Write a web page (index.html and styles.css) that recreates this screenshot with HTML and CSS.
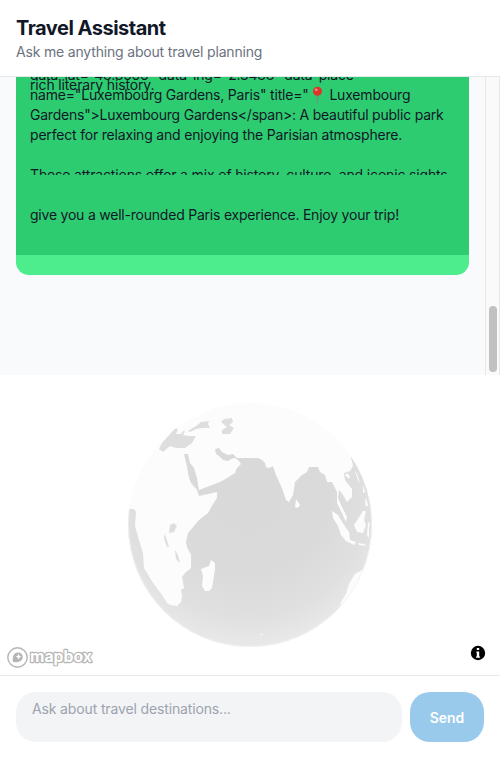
FILE: index.html
```html
<!DOCTYPE html>
<html lang="en">
<head>
<meta charset="utf-8">
<title>Travel Assistant</title>
<link rel="stylesheet" href="styles.css">
</head>
<body>
<header class="header">
  <h1 class="title">Travel Assistant</h1>
  <p class="subtitle">Ask me anything about travel planning</p>
</header>
<main class="chat">
  <div class="messages">
    <div class="bubble">
      <div class="block block-list">
        <p class="line l1">data-lat="48.8566" data-lng="2.3488" data-place-</p>
        <p class="line l2">name="Luxembourg Gardens, Paris" title="<svg class="pin" viewBox="0 0 17 18"><path d="M7.6 8h1.8l-.4 9h-1z" fill="#71907f"/><circle cx="8.5" cy="5.2" r="4.5" fill="#dc352b"/><circle cx="7.2" cy="3.8" r="1.4" fill="#f58a7c"/></svg> Luxembourg</p>
        <p class="line l3">Gardens"&gt;Luxembourg Gardens&lt;/span&gt;: A beautiful public park</p>
        <p class="line l4">perfect for relaxing and enjoying the Parisian atmosphere.</p>
        <p class="line"></p>
        <p class="line l5">These attractions offer a mix of history, culture, and iconic sights</p>
        <p class="overlap">rich literary history.</p>
      </div>
      <div class="block block-end">
        <p class="line l6">give you a well-rounded Paris experience. Enjoy your trip!</p>
      </div>
    </div>
  </div>
  <div class="scrollbar"><div class="thumb"></div></div>
</main>
<section class="map">
<svg class="globe" viewBox="0 375 500 300" width="500" height="300">
  <defs>
    <radialGradient id="sea" gradientUnits="userSpaceOnUse" cx="247" cy="493" r="160">
      <stop offset="0" stop-color="#d9d9d9"/><stop offset=".5" stop-color="#dadada"/><stop offset=".78" stop-color="#e0e0e0"/><stop offset="1" stop-color="#ebebeb"/>
    </radialGradient>
    <linearGradient id="rim" x1="0" y1="0" x2="0" y2="1">
      <stop offset=".3" stop-color="#f8f8f8" stop-opacity="0"/><stop offset=".55" stop-color="#f4f4f4"/>
    </linearGradient>
    <clipPath id="disc"><circle cx="250" cy="525" r="122"/></clipPath>
  </defs>
  <g clip-path="url(#disc)">
    <rect x="120" y="395" width="260" height="260" fill="#fcfcfc"/>
    <path fill="url(#sea)" d="M120 509H131L134 509L136 512L135 526L139 540L143 553L144 568L153 583L162 595L167 603L170 605L177 606L181 602L182 597L181 590L184 588L182 577L185 573L191 568L191 555L187 547L186 542L188 533L199 520L208 513L213 504L217 498L217 492L199 496L197 490L191 483L189 478L187 467L184 454H188L190 463L194 468L197 478L199 490L220 482L227 478L235 473L237 468L241 464L238 460L235 458L231 459L228 461L223 460L219 456L216 454L215 449L219 448L222 452L228 455L233 454L237 458H258L262 460L265 463L266 467L269 468L273 466L276 475L282 488L286 500L289 502L293 495L295 482L302 475L307 472L309 467H318L320 472L325 475L327 482L332 482L337 492V503L341 511L346 522L347 517L342 507L338 498L339 490L343 495L347 502L352 497L352 489L345 480L344 473L350 471L353 466L351 457L354 454L380 465V655H120Z"/>
    <path class="sea" d="M159 449L162 443L171 433L175 428L178 429L176 434L181 434L183 431H185L183 435L188 436H196L192 443L185 448H176L170 446L163 452Z M188 431L196 426L201 422L209 421L208 424L210 428H203L196 429L190 432Z M221 422L224 419L232 418L233 422L229 425L234 428L230 434L222 434V430L227 427Z"/>
    <path class="sea" d="M170 525L174 523L177 526L174 532L169 533Z M165 534L169 547L167 547L164 538Z M175 550L178 555L180 563L176 559Z"/>
    <path class="land" d="M201 569L209 566L211 560L215 563L215 569L212 588L209 591H205L202 586L203 576Z M296 499L300 505L298 508L295 507Z"/>
    <path class="land" d="M332 511L338 515L344 525L349 532L350 540L356 542L354 545L346 541L341 535L338 526L333 518Z M356 522L363 511L366 511L364 520L366 525L363 533L357 532L354 525Z M347 473L350 476L349 479L345 475Z M355 471L357 474L360 483L358 480Z M363 485L365 492L363 493Z M366 498L368 505L366 507L365 501Z M368 523L370 522L369 529L369 538L367 535Z M358 543L364 544L366 546L359 545Z M380 558L364 569L355 574L349 584L346 594L341 602L340 606L347 600L380 604Z M259 634L263 634L262 635Z"/>
  </g>
  <circle cx="250" cy="525" r="121.5" fill="none" stroke="url(#rim)" stroke-opacity=".8"/>
  <g class="logo">
    <circle cx="17.5" cy="657.5" r="9.7" fill="#fff" stroke="#b5b5b5" stroke-width="1.4"/>
    <path d="M12.9 662c-.6-5 .4-9.4 5.2-9.4 2.8 0 4.7 2 4.7 4.3 0 4.5-5 5.7-9.9 5.1z" fill="#b5b5b5"/>
    <path d="m18.6 653.8.9 2 2 .9-2 .9-.9 2-.9-2-2-.9 2-.9z" fill="#fff"/>
    <text class="wordmark" x="30" y="662" textLength="62" lengthAdjust="spacingAndGlyphs">mapbox</text>
  </g>
  <circle cx="478" cy="653" r="7.2"/>
  <path d="M476.8 648h2.4v2h-2.4zM476.4 651.4h2.8v5h.8v1.3h-4v-1.3h.8v-3.7h-.4z" fill="#fff"/>
</svg>
</section>
<footer class="composer">
  <div class="input"><span class="placeholder">Ask about travel destinations...</span></div>
  <div class="send"><span>Send</span></div>
</footer>
</body>
</html>
```
FILE: styles.css
```css
* { box-sizing: border-box; }
body { margin: 0; width: 500px; height: 758px; overflow: hidden; background: #fff; font: 14px/20px Inter, "Liberation Sans", sans-serif; color: #111827; }
h1, p { margin: 0; }
.header { height: 77px; padding: 14px 16px 0; border-bottom: 1px solid #e5e7eb; }
.title { font-size: 20px; line-height: 28px; font-weight: 700; letter-spacing: -.5px; }
.subtitle { color: #6b7280; line-height: 20px; letter-spacing: -.18px; }
.chat { display: flex; height: 298px; overflow: hidden; background: #f9fafb; }
.messages { flex: 1; padding-left: 16px; overflow: hidden; }
.bubble { width: 453px; height: 198px; border-radius: 0 0 13px 13px; background: #4ded8e; overflow: hidden; }
.block { background: #2ecc71; padding: 0 14px; overflow: hidden; }
.block-list { position: relative; height: 98px; }
.line { height: 20px; white-space: nowrap; letter-spacing: -.19px; }
.l1 { margin-top: -12px; }
.l3 { letter-spacing: -.23px; }
.l5 { letter-spacing: -.16px; }
.l6 { letter-spacing: -.22px; }
.overlap { position: absolute; left: 14px; top: -2px; letter-spacing: -.15px; }
.block-end { height: 80px; padding-top: 30px; }
.pin { width: 17px; height: 18px; vertical-align: -4px; }
.scrollbar { width: 15px; padding: 229px 2px 0 3px; background: #fafafa; border: solid #e8e8e8; border-width: 0 1px; }
.thumb { width: 8px; height: 66px; border-radius: 4px; background: #c1c1c1; }
.map { height: 300px; }
.globe { display: block; }
.sea { fill: #dedede; }
.land { fill: #fcfcfc; }
.wordmark { font: 700 16px Inter, sans-serif; fill: #fff; stroke: #b5b5b5; stroke-width: 2.4px; paint-order: stroke; stroke-linejoin: round; }
.composer { height: 83px; padding: 16px 16px 0; border-top: 1px solid #e5e7eb; display: flex; gap: 8px; }
.input { width: 386px; height: 50px; padding: 7px 16px; border-radius: 20px; background: #f3f4f6; color: #9ca3af; letter-spacing: -.14px; }
.send { width: 74px; height: 50px; border-radius: 20px; background: #99caec; color: #fff; font-weight: 600; line-height: 52px; text-align: center; }
```
